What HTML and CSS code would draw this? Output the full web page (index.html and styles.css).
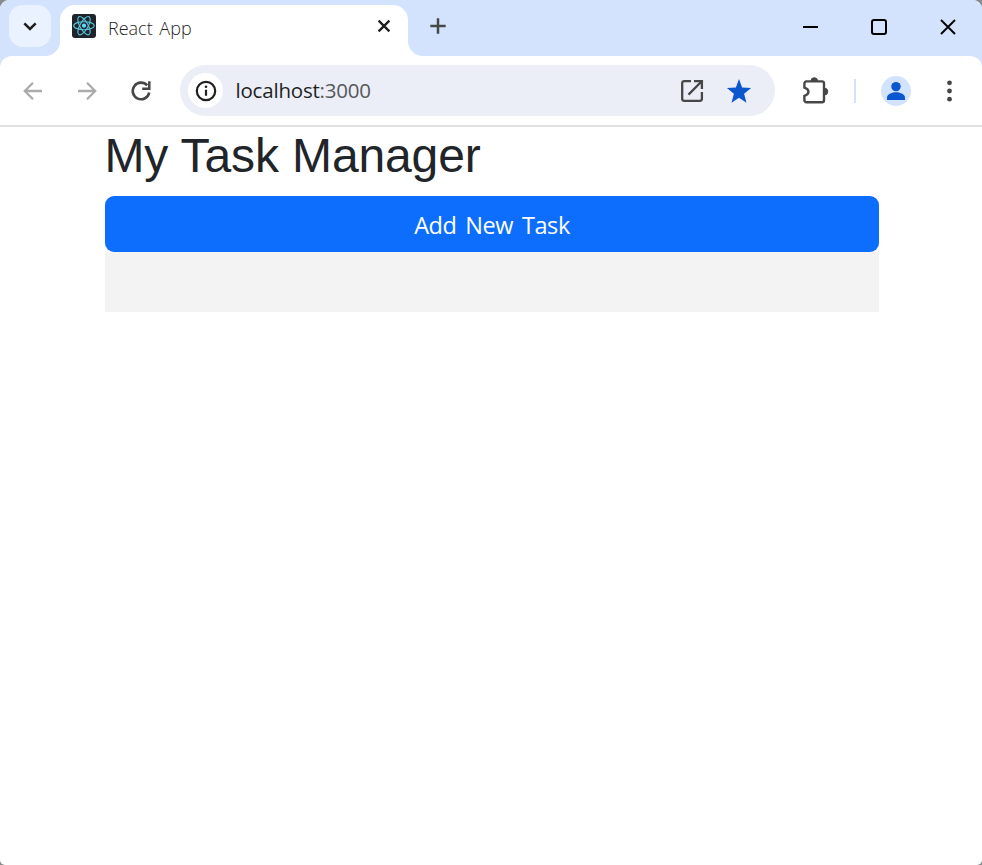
FILE: index.html
```
<!DOCTYPE html>
<html lang="en">
<head>
<meta charset="utf-8">
<title>React App</title>
<link rel="stylesheet" href="styles.css">
</head>
<body>
<div class="window">
  <header class="tabstrip">
    <button class="tab-search" aria-label="Search tabs"><svg width="42" height="42" viewBox="0 0 42 42"><path d="M15.3 18.3l5.7 5.6 5.7-5.6" fill="none" stroke="#1f1f1f" stroke-width="2.5"/></svg></button>
    <div class="tab">
      <svg class="favicon" width="24" height="24" viewBox="0 0 24 24"><rect width="24" height="24" rx="3" fill="#20232a"/><g fill="none" stroke="#58c4dc" stroke-width="1.15"><ellipse cx="12" cy="11.7" rx="10.3" ry="4"/><ellipse cx="12" cy="11.7" rx="10.3" ry="4" transform="rotate(60 12 11.7)"/><ellipse cx="12" cy="11.7" rx="10.3" ry="4" transform="rotate(120 12 11.7)"/></g><circle cx="12" cy="11.7" r="2.1" fill="#61dafb"/></svg>
      <span class="tab-title">React App</span>
      <svg class="tab-close" width="14" height="14" viewBox="0 0 14 14"><path d="M1.6 1.6l10.8 10.8M12.4 1.6L1.6 12.4" stroke="#1f1f1f" stroke-width="2.3"/></svg>
    </div>
    <svg class="new-tab" width="16" height="16" viewBox="0 0 16 16"><path d="M8 .3v15.4M.3 8h15.4" stroke="#474747" stroke-width="2.5"/></svg>
    <div class="controls">
      <svg width="16" height="16" viewBox="0 0 16 16"><path d="M1 8h15" stroke="#000" stroke-width="2"/></svg>
      <svg width="16" height="16" viewBox="0 0 16 16"><rect x="1" y="1" width="14" height="14" rx="2" fill="none" stroke="#000" stroke-width="2"/></svg>
      <svg width="16" height="16" viewBox="0 0 16 16"><path d="M1 1l14 14M15 1L1 15" stroke="#000" stroke-width="1.9"/></svg>
    </div>
  </header>
  <nav class="toolbar">
    <svg class="back" width="20" height="20" viewBox="0 0 20 20"><path d="M19 10H2.5M10 1.8L1.8 10l8.2 8.2" fill="none" stroke="#ababab" stroke-width="2.3"/></svg>
    <svg class="forward" width="20" height="20" viewBox="0 0 20 20"><path d="M1 10h16.5M10 1.8l8.2 8.2-8.2 8.2" fill="none" stroke="#ababab" stroke-width="2.3"/></svg>
    <svg class="reload" width="22" height="22" viewBox="0 0 22 22"><path d="M17.2 5.4A8.3 8.3 0 1 0 19.2 12.4" fill="none" stroke="#474747" stroke-width="2.6"/><path d="M19.3 1.2v7.5h-7.1" fill="none" stroke="#474747" stroke-width="2.5"/></svg>
    <div class="address">
      <span class="site-info"><svg width="22" height="22" viewBox="0 0 22 22"><circle cx="11" cy="11" r="9.2" fill="none" stroke="#1f1f1f" stroke-width="2.2"/><path d="M11 9.8v6" stroke="#1f1f1f" stroke-width="2.2"/><circle cx="11" cy="6.8" r="1.3" fill="#1f1f1f"/></svg></span>
      <span class="url">localhost<span class="port">:3000</span></span>
      <svg class="open" width="24" height="24" viewBox="0 0 24 24"><path d="M11 2.1H4.2a2 2 0 0 0-2 2v15.7a2 2 0 0 0 2 2h15.7a2 2 0 0 0 2-2V13M14 2.1h7.9V10M21.5 2.5L8.5 15.6" fill="none" stroke="#474747" stroke-width="2.3"/></svg>
      <svg class="star" width="26" height="24" viewBox="0 0 26 24"><path d="M13 0l3.1 8.4 9 .5-7 5.8 2.4 9.1-7.5-5-7.5 5 2.4-9.1-7-5.8 9-.5z" fill="#0b57d0"/></svg>
    </div>
    <svg class="extensions" width="28" height="28" viewBox="0 0 28 28"><path d="M4.4 4.4H20a2 2 0 0 1 2 2v16.8a2 2 0 0 1-2 2H4.4a2 2 0 0 1-2-2v-4.3c5.4-1.7 5.4-6.5 0-8.2V6.4a2 2 0 0 1 2-2z" fill="none" stroke="#474747" stroke-width="2.4"/><path d="M9 4a3.3 3.3 0 0 1 6.6 0zM22.4 11.2a3.4 3.4 0 0 1 0 6.8z" fill="#474747" stroke="#474747"/></svg>
    <span class="divider"></span>
    <svg class="profile" width="30" height="30" viewBox="0 0 30 30"><circle cx="15" cy="15" r="15" fill="#d3e3fd"/><circle cx="15" cy="10.6" r="4.7" fill="#0b57d0"/><path d="M6 24v-2.6c0-3.5 5.5-5.2 9-5.2s9 1.7 9 5.2V24z" fill="#0b57d0"/></svg>
    <svg class="menu" width="6" height="22" viewBox="0 0 6 22"><g fill="#474747"><circle cx="3.5" cy="2.8" r="2.4"/><circle cx="3.5" cy="11" r="2.4"/><circle cx="3.5" cy="19.2" r="2.4"/></g></svg>
  </nav>
  <main class="page">
    <h1>My Task Manager</h1>
    <button class="add-task">Add New Task</button>
    <div class="task-list"></div>
  </main>
</div>
</body>
</html>
```
FILE: styles.css
```
* { box-sizing: border-box; }
html { height: 100%; background: #878b8c; }
body { margin: 0; height: 100%; }
svg { display: block; flex: none; }
button { border: 0; padding: 0; }
.window {
  height: 865px;
  overflow: hidden;
  background: #fff;
  border-radius: 9px 9px 5px 5px;
  font-family: "Open Sans", "Noto Sans", sans-serif;
}
.tabstrip {
  display: flex;
  height: 56px;
  padding: 5px 26px 0 9px;
  background: #d3e3fd;
}
.tab-search {
  width: 42px;
  height: 42px;
  border-radius: 14px;
  background: #ebf2ff;
}
.tab {
  position: relative;
  display: flex;
  width: 348px;
  height: 51px;
  margin-left: 9px;
  padding: 9px 17px 0 12px;
  border-radius: 15px 15px 0 0;
  background: #fff;
}
.tab::before, .tab::after {
  content: "";
  position: absolute;
  bottom: 0;
  width: 15px;
  height: 15px;
}
.tab::before { right: 100%; background: radial-gradient(circle at 0 0, transparent 14.5px, #fff 15.5px); }
.tab::after { left: 100%; background: radial-gradient(circle at 100% 0, transparent 14.5px, #fff 15.5px); }
.tab-title {
  margin-left: 12px;
  font-size: 18px;
  font-weight: 300;
  line-height: 29px;
  word-spacing: 2px;
  color: #1f1f1f;
}
.tab-close { margin: 5px 0 0 auto; }
.new-tab { margin: 13px 0 0 22px; }
.controls { display: flex; gap: 53px; margin: 14px 0 0 auto; }
.toolbar {
  display: flex;
  align-items: center;
  height: 71px;
  padding: 0 30px 0 23px;
  border-bottom: 2px solid #e0e0e0;
  border-radius: 12px 12px 0 0;
  background: #fff;
  box-shadow: 0 -12px 0 #d3e3fd;
}
.forward { margin-left: 34px; }
.reload { margin-left: 33px; }
.address {
  display: flex;
  align-items: center;
  width: 595px;
  height: 51px;
  margin-left: 28px;
  padding: 0 23px 0 8px;
  border-radius: 26px;
  background: #ebeef7;
}
.site-info {
  display: grid;
  place-items: center;
  width: 35px;
  height: 35px;
  border-radius: 50%;
  background: #fff;
}
.url {
  margin: 0 0 2px 12.5px;
  font-size: 20.5px;
  line-height: 30px;
  letter-spacing: -.2px;
  color: #1f1f1f;
}
.port { color: #575757; }
.open { margin-left: auto; }
.star { margin-left: 22px; }
.extensions { margin-left: 27px; }
.divider { width: 2px; height: 24px; margin-left: 24px; background: #d3e3fd; }
.profile { margin-left: 25px; }
.menu { margin-left: auto; }
.page { width: 774px; margin: 0 0 0 105px; }
h1 {
  margin: 0 0 12px;
  font: 400 48px/57px "Liberation Sans", sans-serif;
  letter-spacing: -.12px;
  text-indent: -.5px;
  color: #212529;
}
.add-task {
  display: block;
  width: 100%;
  height: 56px;
  padding-top: 2px;
  border-radius: 9px;
  background: #0d6efd;
  color: #fff;
  font: 400 23.5px/36px "Open Sans", sans-serif;
  letter-spacing: -.4px;
  word-spacing: 3px;
}
.task-list { height: 60px; background: #f3f3f3; }
```
